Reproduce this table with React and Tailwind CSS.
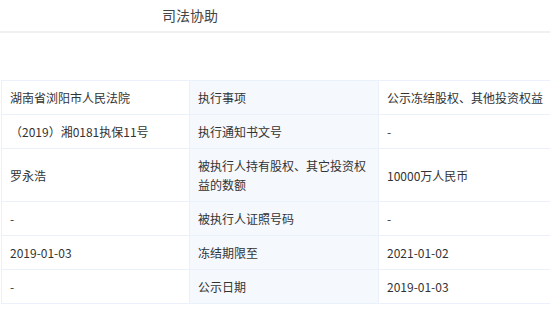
// 司法协助 详情表
const rows = [
  ["湖南省浏阳市人民法院", "执行事项", "公示冻结股权、其他投资权益"],
  ["（2019）湘0181执保11号", "执行通知书文号", "-"],
  ["罗永浩", "被执行人持有股权、其它投资权益的数额", "10000万人民币"],
  ["-", "被执行人证照号码", "-"],
  ["2019-01-03", "冻结期限至", "2021-01-02"],
  ["-", "公示日期", "2019-01-03"],
];

function App() {
  return (
    <div
      className="w-[550px] h-[315px] overflow-hidden bg-white text-[#333333]"
      style={{ fontFamily: '"Noto Sans CJK SC", "Noto Sans", sans-serif' }}
    >
      {/* 标题 */}
      <div className="h-[33px] border-b-2 border-[#f0f0f0] pl-[162px] pt-[5px] text-[14px] leading-[20px] text-[#444444]">
        司法协助
      </div>

      {/* 表格 */}
      <div className="mt-[47px] ml-px w-[580px] border-t border-l border-[#ebf1fa] text-[12px] leading-[19px]">
        {rows.map((row, i) => (
          <div key={i} className="flex border-b border-[#ebf1fa]">
            <div className="w-[188px] shrink-0 flex items-center border-r border-[#ebf1fa] px-2 py-[7px] bg-white">
              {row[0]}
            </div>
            <div className="w-[189px] shrink-0 flex items-center border-r border-[#ebf1fa] px-2 py-[7px] bg-[#f5f8fd]">
              {row[1]}
            </div>
            <div className="flex-1 flex items-center px-2 py-[7px] bg-white">
              {row[2]}
            </div>
          </div>
        ))}
      </div>
    </div>
  );
}

export default App;
